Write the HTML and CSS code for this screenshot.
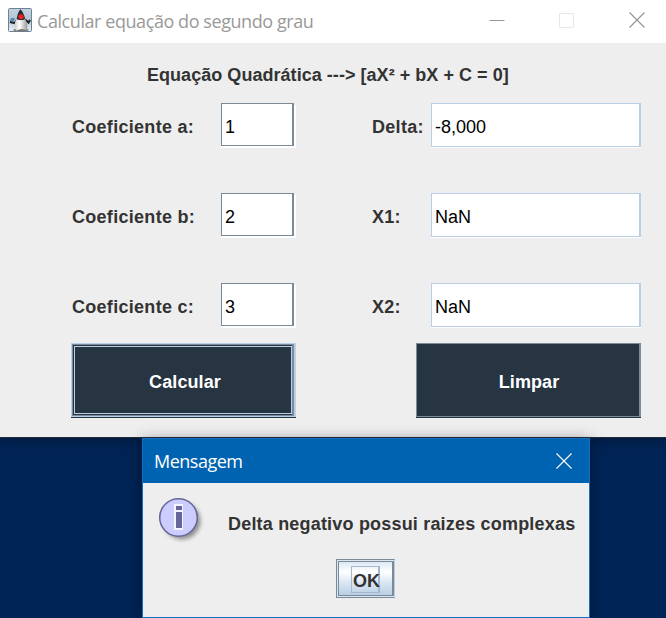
FILE: index.html
```html
<!DOCTYPE html>
<html lang="pt-BR">
<head>
<meta charset="utf-8">
<title>Calcular equação do segundo grau</title>
<link rel="stylesheet" href="styles.css">
</head>
<body>
<main class="app">
  <header class="titlebar">
    <svg class="duke" width="24" height="24" viewBox="0 0 24 24" aria-hidden="true">
      <defs><linearGradient id="sky" x1="0" y1="0" x2="0" y2="1"><stop offset="0" stop-color="#c3d2df"/><stop offset=".5" stop-color="#b4c5d4"/><stop offset="1" stop-color="#eef2f5"/></linearGradient>
      <linearGradient id="belly" x1="0" y1="0" x2="1" y2="0"><stop offset="0" stop-color="#ccc"/><stop offset=".4" stop-color="#fff"/><stop offset="1" stop-color="#999"/></linearGradient></defs>
      <rect x=".5" y=".5" width="23" height="23" rx="1" fill="url(#sky)" stroke="#6b8197"/>
      <ellipse cx="13" cy="22" rx="8" ry="1.300" fill="#77736f"/>
      <path d="M9 12.500 6.500 15 2 14M17 11.500l3.500 3 1.500-2.500" fill="none" stroke="#1d2329" stroke-width="2.200"/>
      <path d="M3 10h4l-1 3H2z" fill="#5a87ad"/>
      <path d="M12.300 1.200c2.200 1.500 4.500 6.500 5 11H8.500c.5-4 1.500-8.500 3.800-11z" fill="#292b30"/>
      <path d="M8.500 11q4.500 2.500 8.500 0c2.500 3.500 3 8 1.500 11.500q-2-1.500-5-1.500-3 .5-5.500 1.800C6 19 6 15 8.500 11z" fill="url(#belly)"/>
      <ellipse cx="13" cy="8.700" rx="2.700" ry="2.500" fill="#ee2026"/>
    </svg>
    <h1 class="caption">Calcular equação do segundo grau</h1>
    <div class="controls">
      <svg width="16" height="16" viewBox="0 0 16 16"><path d="M.5 8.500h15" stroke="#999"/></svg>
      <svg width="16" height="16" viewBox="0 0 16 16"><path d="M.5 1.500h14v14H.5z" fill="none" stroke="#e8e8e8"/></svg>
      <svg width="16" height="16" viewBox="0 0 16 16"><path d="m.5.5 15 15m0-15-15 15" stroke="#929292" stroke-width="1.100"/></svg>
    </div>
  </header>
  <h2 class="heading">Equação Quadrática ---&gt; [aX² + bX + C = 0]</h2>
  <div class="form">
    <span class="label">Coeficiente a:</span><div class="field input">1</div>
    <span class="label">Delta:</span><div class="field output">-8,000</div>
    <span class="label">Coeficiente b:</span><div class="field input">2</div>
    <span class="label">X1:</span><div class="field output">NaN</div>
    <span class="label">Coeficiente c:</span><div class="field input">3</div>
    <span class="label">X2:</span><div class="field output">NaN</div>
  </div>
  <div class="actions">
    <div class="action default"><div class="ring"><div class="face">Calcular</div></div></div>
    <div class="action plain">Limpar</div>
  </div>
</main>
<section class="dialog">
  <header class="dialog-bar">
    <h2 class="dialog-caption">Mensagem</h2>
    <svg width="16" height="16" viewBox="0 0 16 16"><path d="m.5.5 15 15m0-15-15 15" stroke="#fff" stroke-width="1.100"/></svg>
  </header>
  <div class="message">
    <svg class="info" width="50" height="50" viewBox="0 0 50 50" aria-hidden="true">
      <defs><filter id="soft" x="-30%" y="-30%" width="160%" height="160%"><feGaussianBlur stdDeviation="2"/></filter></defs>
      <circle cx="24" cy="24" r="18.500" fill="#000" opacity=".4" filter="url(#soft)"/>
      <circle cx="20.500" cy="20.500" r="18.800" fill="#ccf" stroke="#669" stroke-width="1.500"/>
      <path d="M16 7h9v26h-9z" fill="#f4f4ff"/>
      <path d="M18 9h6v4h-6zM18 15h6v16h-6z" fill="#669"/>
    </svg>
    <p class="text">Delta negativo possui raizes complexas</p>
  </div>
  <div class="ok"><div class="ok-face"><span class="ok-focus">OK</span></div></div>
</section>
</body>
</html>
```

FILE: styles.css
```css
* { box-sizing: border-box; }
body {
  margin: 0;
  height: 618px;
  overflow: hidden;
  background: #002456;
  font: bold 18px/24px "Liberation Sans", Arial, sans-serif;
  color: #333;
}
h1, h2, p { margin: 0; font-size: inherit; }
svg { display: block; flex: none; }
.app {
  height: 438px;
  background: #eee;
  border-bottom: 1px solid #252d3b;
  box-shadow: 0 2px 12px rgba(0, 0, 0, .35);
}
.titlebar {
  display: flex;
  align-items: center;
  height: 43px;
  padding: 0 21px 3px 8px;
  background: #fff;
}
.caption {
  margin: 2px 0 0 5px;
  font: 18px/24px "Open Sans", "Noto Sans", sans-serif;
  letter-spacing: -.43px;
  color: #999;
  white-space: nowrap;
}
.controls { display: flex; gap: 54px; margin-left: auto; }
.heading { padding: 20px 0 0 147px; letter-spacing: .04px; white-space: nowrap; }
.form {
  display: grid;
  grid-template-columns: 149px 151px 59px 210px;
  grid-auto-rows: 45px;
  row-gap: 45px;
  padding: 16px 0 0 72px;
}
.label { padding-top: 12px; letter-spacing: .29px; white-space: nowrap; }
.field {
  padding: 11px 3px;
  border: 1px solid;
  border-right-width: 2px;
  font-weight: normal;
  color: #000;
  background: #fff;
}
.input {
  width: 73px;
  height: 43px;
  border-color: #7a8a99;
  box-shadow: 2px 2px 0 #fff, 0 2px 0 #fff;
}
.output {
  height: 44px;
  border-color: #b8cfe5;
  box-shadow: 0 1px 0 #fff;
}
.actions { display: flex; gap: 120px; padding: 15px 0 0 71px; }
.action {
  width: 225px;
  height: 74px;
  border: 1px solid #7a8a99;
  border-right-width: 2px;
  background: #273442;
  box-shadow: 0 1px 0 #273442;
  color: #fff;
  text-align: center;
  letter-spacing: .1px;
}
.plain { padding: 26px 0 0 2px; }
.default { border-color: #b8cfe5; }
.ring {
  height: 72px;
  padding: 1px 0 1px 1px;
  border: 1px solid #7a8a99;
  border-right-width: 2px;
}
.face {
  height: 68px;
  padding: 23px 0 0 4px;
  border: 1px solid #b8cfe5;
}
.dialog {
  position: absolute;
  left: 142px;
  top: 438px;
  width: 448px;
  height: 180px;
  border: 1px solid #1270be;
  background: #eee;
  box-shadow: 0 2px 14px rgba(0, 0, 0, .4);
}
.dialog-bar {
  display: flex;
  align-items: center;
  justify-content: space-between;
  height: 44px;
  padding: 0 17px 0 11px;
  background: #0063b1;
}
.dialog-caption {
  font: 18px/24px "Open Sans", "Noto Sans", sans-serif;
  letter-spacing: -.5px;
  color: #fff;
}
.message { display: flex; padding: 14px 0 0 15px; height: 76px; }
.text { padding: 15px 0 0 20px; letter-spacing: .19px; white-space: nowrap; }
.ok {
  width: 59px;
  height: 39px;
  margin-left: 193px;
  border: solid #7a8a99;
  border-width: 1px 1px 1px 1px;
  border-right-color: #b8cfe5;
  padding: 1px 0 1px 1px;
  background: #dce6ef;
}
.ok-face {
  height: 35px;
  padding: 4px 0 0 12px;
  border: 1px solid #7a8a99;
  border-right-width: 2px;
  background: linear-gradient(#dde8f3 0, #fff 30%, #dde8f3 60%, #b8cfe5);
}
.ok-focus {
  display: block;
  width: 29px;
  height: 27px;
  padding: 2px 0 0 1px;
  border: 1px solid #a3b8cc;
  border-right-width: 2px;
}
```
